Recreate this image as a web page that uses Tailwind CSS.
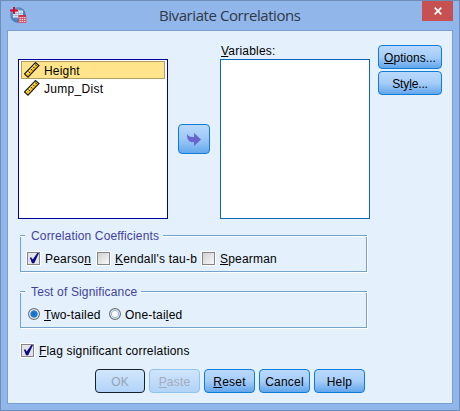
<!DOCTYPE html>
<html lang="en">
<head>
<meta charset="utf-8">
<title>Bivariate Correlations</title>
<script src="https://cdn.jsdelivr.net/npm/@tailwindcss/browser@4"></script>
</head>
<body class="w-[460px] h-[411px] overflow-hidden font-['Liberation_Sans',Arial,sans-serif] text-[12px] leading-[14px] text-black">
<svg class="hidden">
  <defs>
    <symbol id="ruler" viewBox="0 0 16 16">
      <path d="M.5 12 11.500 .5 15 3.500 4 15.200Z" fill="#fbc31d" stroke="#1c1c18" stroke-width="1.100"/>
      <path d="M2 12 11.700 2" stroke="#fff0a8" stroke-width="1"/>
      <path d="M4.500 9.500 6 11M6.800 7 8.300 8.500M9 4.700 10.500 6.200M11.500 2.500 12.500 4" stroke="#222" stroke-width="1"/>
    </symbol>
    <symbol id="check" viewBox="0 0 11 11">
      <path d="M1.800 4.500 3.500 4.500 4.700 6.500 9.300 0 11 0 6.200 10.300 4 10.300Z" fill="#0b0b86"/>
    </symbol>
  </defs>
</svg>
<div class="w-[460px] h-[411px] flex flex-col bg-[#91b6ea] border border-[#6e8cb8] px-[6px] pb-[6px]">
  <header class="h-[29px] shrink-0 flex">
    <svg class="w-[18px] h-[18px] mt-[5px] ml-[2px]" viewBox="0 0 18 18">
      <defs><radialGradient id="globe" cx=".4" cy=".35"><stop offset="0" stop-color="#b8d4ec"/><stop offset=".6" stop-color="#5d90c4"/><stop offset="1" stop-color="#4a7db5"/></radialGradient></defs>
      <circle cx="9" cy="9" r="7.800" fill="url(#globe)"/>
      <path d="M4 4.500h10v7H4z" fill="#e4eff9"/>
      <path d="M4 7.500h10M4 9.500h6M7 5v6M9.500 5v6M12 5v4" stroke="#8ab0d6" stroke-width=".7"/>
      <path d="M5 1v7M1 4.500h8" stroke="#d40d32" stroke-width="2"/>
      <path d="M10 9h7v8h-7z" fill="#f5d5d8"/>
      <path d="M9.500 10h7.500" stroke="#cc2f43" stroke-width="2"/>
      <path d="M10 12.500h7M10 14.500h7M10 16.500h7M10 10v7M12.300 10v7M14.600 10v7M16.800 10v7" stroke="#d4485a" stroke-width=".8"/>
    </svg>
    <h1 class="font-['Open_Sans','Noto_Sans',sans-serif] text-[15px] leading-[20px] pt-[4px] ml-[132px] tracking-[-.43px] text-[#303846] whitespace-nowrap">Bivariate Correlations</h1>
    <button class="ml-auto w-[31px] h-[20px] bg-[#c75050] flex items-center justify-center">
      <svg class="w-[8px] h-[8px]" viewBox="0 0 8 8"><path d="M.7.700 7.300 7.300M7.300.700.700 7.300" stroke="#fff" stroke-width="1.700"/></svg>
    </button>
  </header>
  <main class="h-[374px] w-[446px] border border-[#789fd0] bg-[#e4f0fc] flex flex-col pl-[10px] pr-[10px]">
    <section class="flex h-[188px] shrink-0">
      <div class="w-[150px] h-[160px] mt-[28px] border border-[#0000a0] bg-white px-[2px] pt-[1px]">
        <div class="h-[18px] w-[144px] border border-[#b19d5d] bg-[#ffe48c] flex items-center pl-[2px]">
          <svg class="w-[16px] h-[16px]"><use href="#ruler"/></svg><span class="ml-[4px] mt-[2px] tracking-[.2px]">Height</span>
        </div>
        <div class="h-[18px] flex items-center pl-[3px]">
          <svg class="w-[16px] h-[16px]"><use href="#ruler"/></svg><span class="ml-[4px] mt-[2px] tracking-[.3px]">Jump_Dist</span>
        </div>
      </div>
      <button class="w-[32px] h-[30px] mt-[93px] ml-[10px] border border-[#0f7cd7] rounded-[4px] bg-linear-to-b from-[#b9d9fc] via-[#9dc8f6] to-[#65a8ed] flex items-center justify-center">
        <svg class="w-[14px] h-[13px]" viewBox="0 0 14 13"><path d="M0 1C2 4 4 4 7 4V0L14 6.500 7 13V9C3 9.500 0 8 0 1Z" fill="#6865ce"/></svg>
      </button>
      <div class="w-[150px] ml-[10px] pt-[13px]">
        <div class="h-[15px] pl-px tracking-[.2px] leading-[15px]"><u>V</u>ariables:</div>
        <div class="h-[160px] border border-[#0d67bd] bg-white"></div>
      </div>
      <div class="ml-[8px] mt-[14px] flex flex-col gap-[2px]">
        <button class="w-[64px] h-[24px] pt-[1px] border border-[#0f7cd7] rounded-[4px] bg-linear-to-b from-[#b9d9fc] via-[#a6cdf8] to-[#62a6ec] tracking-[.05px]"><u>O</u>ptions...</button>
        <button class="w-[64px] h-[24px] pt-[1px] border border-[#0f7cd7] rounded-[4px] bg-linear-to-b from-[#b9d9fc] via-[#a6cdf8] to-[#62a6ec] tracking-[-.15px]">Sty<u>l</u>e...</button>
      </div>
    </section>
    <fieldset class="ml-[2px] mt-[11px] w-[347px] h-[42px] shrink-0">
      <div class="flex items-center h-[11px]">
        <span class="w-[5px] h-px bg-[#74a2cf] shadow-[0_1px_#fff]"></span><span class="ml-[6px] mr-[4px] pt-px text-[#42429e] tracking-[.15px] whitespace-nowrap">Correlation Coefficients</span><span class="flex-1 h-px bg-[#74a2cf] shadow-[0_1px_#fff]"></span>
      </div>
      <div class="-mt-[6px] h-[37px] border border-t-0 border-[#74a2cf] shadow-[1px_1px_#fff] flex items-start pt-[17px] pl-[6px] whitespace-nowrap tracking-[.2px]">
        <label class="w-[70px] flex"><svg class="w-[13px] h-[13px] mr-[5px] border border-[#858585] bg-[#e4e4e8] shadow-[0_0_0_1px_#fff]"><use href="#check" width="11" height="11"/></svg>Pearso<u>n</u></label>
        <label class="w-[105px] flex tracking-[.2px]"><span class="w-[13px] h-[13px] mr-[5px] border border-[#858585] bg-linear-to-br from-[#d0d0d0] to-[#fafafa] shadow-[0_0_0_1px_#fff]"></span><span><u>K</u>endall's tau-b</span></label>
        <label class="flex"><span class="w-[13px] h-[13px] mr-[5px] border border-[#858585] bg-linear-to-br from-[#d0d0d0] to-[#fafafa] shadow-[0_0_0_1px_#fff]"></span><span><u>S</u>pearman</span></label>
      </div>
    </fieldset>
    <fieldset class="ml-[2px] mt-[14px] w-[347px] h-[42px] shrink-0">
      <div class="flex items-center h-[11px]">
        <span class="w-[5px] h-px bg-[#74a2cf] shadow-[0_1px_#fff]"></span><span class="ml-[6px] mr-[4px] pt-px text-[#42429e] tracking-[.15px] whitespace-nowrap">Test of Significance</span><span class="flex-1 h-px bg-[#74a2cf] shadow-[0_1px_#fff]"></span>
      </div>
      <div class="-mt-[6px] h-[37px] border border-t-0 border-[#74a2cf] shadow-[1px_1px_#fff] flex items-start pt-[17px] pl-[7px] whitespace-nowrap tracking-[.2px]">
        <label class="w-[81px] flex"><svg class="w-[12px] h-[12px] mr-[4px]" viewBox="0 0 12 12"><circle cx="6" cy="6" r="5.400" fill="#fff" stroke="#6c7278" stroke-width="1.200"/><circle cx="6" cy="6" r="3.500" fill="#1774ce" stroke="#4d8fca" stroke-width=".7"/></svg><span><u>T</u>wo-tailed</span></label>
        <label class="flex"><svg class="w-[12px] h-[12px] mr-[4px]" viewBox="0 0 12 12"><circle cx="6" cy="6" r="5.400" fill="#fff" stroke="#6c7278" stroke-width="1.200"/><circle cx="6" cy="6" r="3.700" fill="#fafcff" stroke="#91b6d8"/></svg><span>One-tai<u>l</u>ed</span></label>
      </div>
    </fieldset>
    <label class="mt-[16px] ml-[3px] h-[14px] shrink-0 flex tracking-[.18px]"><svg class="w-[13px] h-[13px] mr-[5px] border border-[#858585] bg-[#e4e4e8] shadow-[0_0_0_1px_#fff]"><use href="#check" width="11" height="11"/></svg><span><u>F</u>lag significant correlations</span></label>
    <footer class="mt-[11px] ml-[77px] flex gap-[4px] shrink-0 whitespace-nowrap">
      <button class="w-[50px] h-[24px] pt-[1px] border border-[#16212c] rounded-[4px] bg-linear-to-b from-[#d2e7fe] to-[#b1d3f7] text-[#96a3b3]">OK</button>
      <button class="w-[51px] h-[24px] pt-[1px] border border-[#8fc3f0] rounded-[4px] bg-linear-to-b from-[#cfe5fd] to-[#b1d3f7] text-[#a3acb8] tracking-[.2px]"><u>P</u>aste</button>
      <button class="w-[51px] h-[24px] pt-[1px] border border-[#0f7cd7] rounded-[4px] bg-linear-to-b from-[#b9d9fc] via-[#a6cdf8] to-[#62a6ec] tracking-[.2px]"><u>R</u>eset</button>
      <button class="w-[51px] h-[24px] pt-[1px] border border-[#0f7cd7] rounded-[4px] bg-linear-to-b from-[#b9d9fc] via-[#a6cdf8] to-[#62a6ec] tracking-[.2px]">Cancel</button>
      <button class="w-[51px] h-[24px] pt-[1px] border border-[#0f7cd7] rounded-[4px] bg-linear-to-b from-[#b9d9fc] via-[#a6cdf8] to-[#62a6ec] tracking-[.2px]">Help</button>
    </footer>
  </main>
</div>
</body>
</html>
